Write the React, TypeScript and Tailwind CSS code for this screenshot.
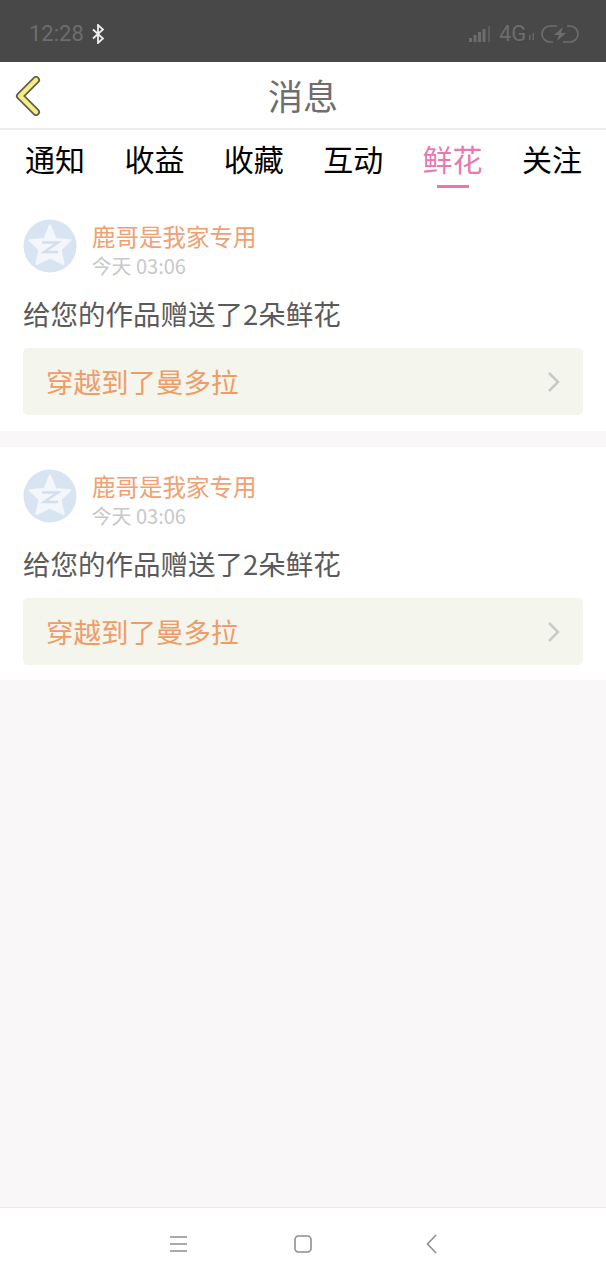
const cjk = 'font-["Noto_Sans_CJK_SC","Liberation_Sans",sans-serif]';

const tabs = ['通知', '收益', '收藏', '互动', '鲜花', '关注'];

function StarAvatar() {
  return (
    <svg width="54" height="54" viewBox="0 0 54 54" className="shrink-0">
      <circle cx="27" cy="27" r="26.5" fill="#d9e4f2" />
      <path
        d="M27 6.5 L32.6 20 L47.5 21.2 L37.6 30.6 L40.6 45 L27 38.6 L13.4 45 L16.4 30.6 L6.5 21.2 L21.4 20 Z"
        fill="#f3f6fb"
        stroke="#f3f6fb"
        strokeWidth="2"
        strokeLinejoin="round"
      />
      <path d="M19 23.5 H35 L21 33 H35" fill="none" stroke="#d3dfef" strokeWidth="2.5" />
    </svg>
  );
}

function MessageCard() {
  return (
    <div className="bg-white pt-[22px] pb-[16px] last:pb-[15px] px-[23px]">
      <div className="flex items-start gap-[15px]">
        <StarAvatar />
        <div className="flex flex-col pt-[3px]">
          <span className="text-[23.5px] leading-[28px] text-[#f0a071]">鹿哥是我家专用</span>
          <span className="text-[20px] leading-[26px] mt-[3px] -ml-[0.5px] text-[#c8c8c8]">今天 03:06</span>
        </div>
      </div>
      <p className="mt-[14px] text-[27.5px] leading-[40px] text-[#5a5a5a]">给您的作品赠送了2朵鲜花</p>
      <div className="mt-[15px] h-[67px] rounded-[5px] bg-[#f4f5ed] flex items-center justify-between pl-[23px] pr-[23px]">
        <span className="text-[27.5px] text-[#f09c66]">穿越到了曼多拉</span>
        <svg width="13" height="22" viewBox="0 0 13 22" fill="none" stroke="#c8cac4" strokeWidth="2.5">
          <path d="M2 2 L11 11 L2 20" />
        </svg>
      </div>
    </div>
  );
}

export default function App() {
  return (
    <div className={`${cjk} w-[606px] h-[1280px] flex flex-col bg-[#f9f7f8] overflow-hidden`}>
      {/* status bar */}
      <div className="h-[62px] bg-[#484848] shrink-0 flex items-center justify-between pl-[29px] pr-[27px] pt-[5px]">
        <div className="flex items-center gap-[8px]">
          <span className='font-["Roboto",sans-serif] text-[22px] text-[#6d6d6d]'>12:28</span>
          <svg width="12" height="20" viewBox="0 0 12 20" fill="none" stroke="#f0f0f0" strokeWidth="1.8">
            <path d="M1 5.5 L11 14.5 L6 19 V1 L11 5.5 L1 14.5" />
          </svg>
        </div>
        <div className="flex items-center">
          <svg width="21" height="16" viewBox="0 0 21 16" fill="#6d6d6d">
            <rect x="0" y="12" width="3" height="4" />
            <rect x="4.5" y="9" width="3" height="7" />
            <rect x="9" y="6" width="3" height="10" />
            <rect x="13.5" y="3" width="3" height="13" />
            <rect x="19" y="0" width="2" height="16" opacity="0.6" />
          </svg>
          <span className='ml-[9px] w-[26px] font-["Roboto",sans-serif] text-[22px] leading-none text-[#6d6d6d]'>4G</span>
          <svg width="5" height="7" viewBox="0 0 5 7" fill="#6d6d6d" opacity="0.8" className="ml-[4px] mt-[6px]">
            <rect x="0" y="2" width="1.6" height="5" />
            <rect x="3.4" y="0" width="1.6" height="7" />
          </svg>
          <svg width="38" height="18" viewBox="0 0 38 18" fill="none" className="ml-[7px]">
            <path d="M16 1 H9 a8 8 0 0 0 0 16 H12 M22 17 H29 a8 8 0 0 0 0 -16 H26" stroke="#6d6d6d" strokeWidth="1.6" />
            <path d="M22 2 L13 10 H18 L16 16 L25 8 H20 Z" fill="#6d6d6d" />
          </svg>
        </div>
      </div>

      {/* title */}
      <div className="relative h-[66px] bg-white shrink-0 flex items-center justify-center">
        <svg width="28" height="40" viewBox="0 0 28 40" className="absolute left-[15px] top-[14px]">
          <path
            d="M21 4 L5 20 L21 36"
            fill="none"
            stroke="#5f5f52"
            strokeWidth="8"
            strokeLinecap="round"
            strokeLinejoin="round"
          />
          <path
            d="M21 4 L5 20 L21 36"
            fill="none"
            stroke="#f6ee80"
            strokeWidth="4.5"
            strokeLinecap="round"
            strokeLinejoin="round"
          />
        </svg>
        <span className="text-[35px] leading-none -mt-[1px] text-[#6e6e6e]">消息</span>
      </div>
      <div className="h-[2px] bg-[#eeeeee] shrink-0" />

      {/* tabs */}
      <div className="h-[67px] pb-[9px] bg-white shrink-0 flex justify-between pl-[25px] pr-[24px]">
        {tabs.map((tab) => (
          <div key={tab} className="relative flex flex-col items-center">
            <span className={`text-[30px] leading-[56px] ${tab === '鲜花' ? 'text-[#e878ad]' : 'text-black'}`}>{tab}</span>
            {tab === '鲜花' && <div className="absolute bottom-0 w-[32px] h-[3px] bg-[#e878ad]" />}
          </div>
        ))}
      </div>

      {/* messages */}
      <div className="flex flex-col gap-[16px]">
        <MessageCard />
        <MessageCard />
      </div>

      <div className="flex-1" />

      {/* nav bar */}
      <div className="h-[73px] shrink-0 bg-white border-t border-[#e8e8e8] flex items-center pl-[170px]">
        <svg width="17" height="16" viewBox="0 0 17 16" stroke="#8f8f8f" strokeWidth="1.6">
          <path d="M0 1 H17 M0 8 H17 M0 15 H17" />
        </svg>
        <svg width="18" height="18" viewBox="0 0 18 18" fill="none" stroke="#8f8f8f" strokeWidth="1.6" className="ml-[107px]">
          <rect x="1" y="1" width="16" height="16" rx="3.5" />
        </svg>
        <svg width="11" height="20" viewBox="0 0 11 20" fill="none" stroke="#8f8f8f" strokeWidth="1.6" className="ml-[114px]">
          <path d="M10 1 L1.5 10 L10 19" />
        </svg>
      </div>
    </div>
  );
}
